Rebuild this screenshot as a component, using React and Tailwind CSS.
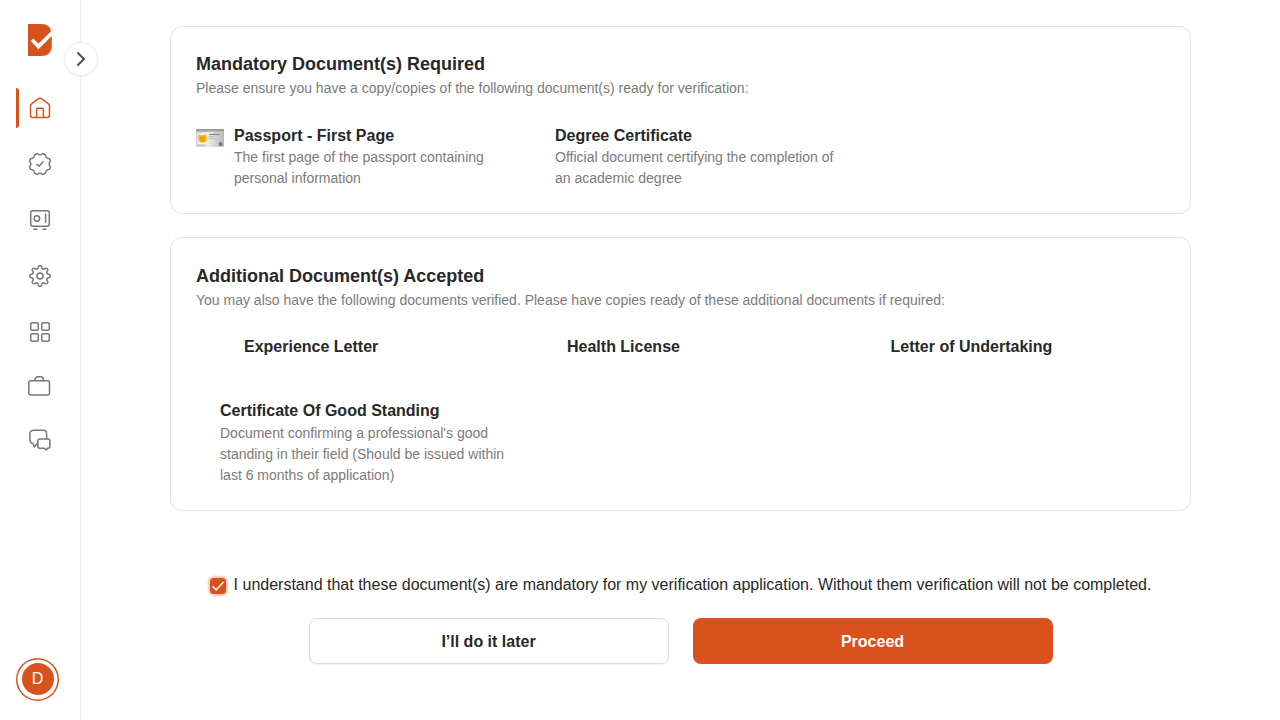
const line = {
  fill: 'none',
  stroke: 'currentColor',
  strokeWidth: 1.5,
  strokeLinecap: 'round',
  strokeLinejoin: 'round',
};

function Icon({ children }) {
  return (
    <svg width="24" height="24" viewBox="0 0 24 24" {...line}>
      {children}
    </svg>
  );
}

function wavePath(points, outer, inner, offset) {
  const n = points * 12;
  const mid = (outer + inner) / 2;
  const amp = (outer - inner) / 2;
  let d = '';
  for (let i = 0; i < n; i++) {
    const a = (i / n) * Math.PI * 2;
    const wave = Math.tanh(2 * Math.cos(points * (a - offset))) / Math.tanh(2);
    const r = mid + amp * wave;
    d += `${i ? 'L' : 'M'}${(12 + r * Math.cos(a)).toFixed(2)} ${(12 + r * Math.sin(a)).toFixed(2)}`;
  }
  return d + 'Z';
}

const gear = wavePath(8, 10.2, 7.5, 0);
const badge = wavePath(8, 10.8, 9.3, Math.PI / 8);

function Sidebar() {
  return (
    <aside className="relative flex h-full w-[81px] shrink-0 flex-col border-r border-[#ececec] pt-6 pb-[19.5px]">
      <svg className="ml-7" width="24" height="32" viewBox="0 0 24 32">
        <path d="M0 0h13.500C19 0 22.500 3 23 7.300L10.400 19.800 5.400 14.500 2.700 17.100l7.700 8.100L23.800 12V22c0 6-4 10-10 10H0Z" fill="#d9521e" />
      </svg>
      <button className="absolute top-[42px] left-16 flex size-[34px] items-center justify-center rounded-full border border-[#eeeeee] bg-white text-[#475066] shadow-[0_1px_3px_rgba(0,0,0,0.06)]">
        <svg width="16" height="16" viewBox="0 0 16 16" fill="none" stroke="currentColor" strokeWidth="2.100">
          <path d="M4.400 1.600 11 8l-6.600 6.400" />
        </svg>
      </button>
      <nav className="mt-8 flex flex-col text-[#777777]">
        <a className="flex h-10 items-center text-[#d9521e]">
          <span className="ml-4 h-10 w-[3px] rounded-r-[3px] bg-[#d9521e]" />
          <span className="ml-[9px]">
            <Icon>
              <path d="M2.500 9.800c0-.8.400-1.500 1-2l7-5.200c.9-.7 2.100-.7 3 0l7 5.200c.6.500 1 1.200 1 2v9.400c0 1.300-.9 2.200-2.200 2.200H4.700c-1.300 0-2.200-.9-2.200-2.200Z" />
              <path d="M8.600 21.300v-8.100c0-.5.400-.9.900-.9h5c.5 0 .9.400.9.900v8.100" />
            </Icon>
          </span>
        </a>
        <a className="mt-4 flex h-10 items-center pl-7">
          <Icon>
            <path d={badge} />
            <path d="m8.900 12.200 2.200 2 4-4.500" />
          </Icon>
        </a>
        <a className="mt-4 flex h-10 items-center pl-7">
          <Icon>
            <rect x="2.700" y="2.700" width="18.600" height="15.600" rx="2.200" />
            <circle cx="8.900" cy="10.500" r="2.700" />
            <path d="M17.600 6.300v8M5.900 21.200h2.900M15 21.200h2.900" />
          </Icon>
        </a>
        <a className="mt-4 flex h-10 items-center pl-7">
          <Icon>
            <path d={gear} />
            <circle cx="12" cy="12" r="3" />
          </Icon>
        </a>
        <a className="mt-4 flex h-10 items-center pl-7">
          <Icon>
            <rect x="2.700" y="2.700" width="7.600" height="7.600" rx="1.500" />
            <rect x="13.700" y="2.700" width="7.600" height="7.600" rx="1.500" />
            <rect x="2.700" y="13.700" width="7.600" height="7.600" rx="1.500" />
            <rect x="13.700" y="13.700" width="7.600" height="7.600" rx="1.500" />
          </Icon>
        </a>
        <a className="mt-3.5 flex h-10 items-center pl-7">
          <Icon>
            <rect x="0.800" y="6.700" width="20.700" height="14.400" rx="2" />
            <path d="M7 6.500V5.600c0-1.700 1.200-2.900 2.900-2.900h2.500c1.700 0 2.900 1.200 2.900 2.900v.9" />
          </Icon>
        </a>
        <a className="mt-3.5 flex h-10 items-center pl-7">
          <Icon>
            <path d="M9.200 15.400 6.300 18.900 5 15.600C3 15.200 1.900 13.700 1.900 11.600V5.800C1.900 3.600 3.300 2.300 5.500 2.300h9.600c2.200 0 3.500 1.300 3.500 3.500v5" />
            <path d="M11.900 11h8c1.200 0 2 .8 2 2v5.300c0 1.200-.8 2-2 2h-.6l-.6 1.700-2.500-1.700h-4.300c-1.200 0-2-.8-2-2V13c0-1.200.8-2 2-2Z" />
          </Icon>
        </a>
      </nav>
      <div className="mt-auto ml-4 flex size-[43px] items-center justify-center rounded-full shadow-[inset_0_0_0_1.5px_#d9521e]">
        <span className="flex size-8 items-center justify-center rounded-full bg-[#d9521e] pb-px text-base text-white">D</span>
      </div>
    </aside>
  );
}

function IdCard() {
  return (
    <svg className="mt-1 mr-2.5 shrink-0" width="28" height="18" viewBox="0 0 28 18">
      <defs>
        <linearGradient id="card" x1="0" y1="0" x2="1" y2="0">
          <stop offset="0" stopColor="#cfcfcf" />
          <stop offset=".45" stopColor="#eaeaea" />
          <stop offset="1" stopColor="#b8b8b8" />
        </linearGradient>
        <linearGradient id="edge" x1="0" y1="0" x2="0" y2="1">
          <stop offset="0" stopColor="#8f8f8f" />
          <stop offset="1" stopColor="#b5b5b5" />
        </linearGradient>
      </defs>
      <rect width="28" height="18" rx="1" fill="url(#card)" />
      <path d="M0 1c0-.6.400-1 1-1h26c.6 0 1 .4 1 1v1.800H0Z" fill="url(#edge)" />
      <rect x="1.500" y="4.500" width="10" height="10.500" fill="#f7f3e4" />
      <path d="M2.500 5.600 4 6.300h5l1.500-.7v6L8.800 13.500H4.200L2.500 11.600Z" fill="#f5ae14" />
      <path d="M4.200 8.600h1.400M7.400 8.600h1.400M4.800 11h3.400" stroke="#c98209" strokeWidth=".8" />
      <path d="M13 5.500h10.500" stroke="#777" strokeWidth=".9" />
      <path d="M12.500 7.700h6M12.500 9.700h9M3 16.300h7" stroke="#b0b0b0" strokeWidth=".7" />
      <circle cx="24.500" cy="15" r="2" fill="#7d7d7d" />
    </svg>
  );
}

function CardHeading({ title, text }) {
  return (
    <>
      <h2 className="text-lg leading-6 font-bold">{title}</h2>
      <p className="text-sm leading-[25px] text-[#7b7b7b]">{text}</p>
    </>
  );
}

export default function App() {
  return (
    <div className="flex h-screen overflow-hidden bg-white font-['Liberation_Sans',Arial,sans-serif] text-[#282828]">
      <Sidebar />
      <main className="flex flex-1 flex-col items-center pt-[26px]">
        <section className="h-[188px] w-[1021px] rounded-xl border border-[#e2e2e2] pt-[25px] pl-[25px]">
          <CardHeading title="Mandatory Document(s) Required" text="Please ensure you have a copy/copies of the following document(s) ready for verification:" />
          <div className="mt-6 flex">
            <div className="flex w-[359px]">
              <IdCard />
              <div>
                <h3 className="text-base leading-[22px] font-bold">Passport - First Page</h3>
                <p className="text-sm leading-[21px] text-[#7b7b7b]">The first page of the passport containing<br />personal information</p>
              </div>
            </div>
            <div>
              <h3 className="text-base leading-[22px] font-bold">Degree Certificate</h3>
              <p className="text-sm leading-[21px] text-[#7b7b7b]">Official document certifying the completion of<br />an academic degree</p>
            </div>
          </div>
        </section>
        <section className="mt-[23px] h-[274px] w-[1021px] rounded-xl border border-[#e2e2e2] pt-[26px] pl-[25px]">
          <CardHeading title="Additional Document(s) Accepted" text="You may also have the following documents verified. Please have copies ready of these additional documents if required:" />
          <div className="mt-[23px] flex pl-12 text-base leading-[22px] font-bold">
            <h3 className="w-[323px]">Experience Letter</h3>
            <h3 className="w-[323.5px]">Health License</h3>
            <h3>Letter of Undertaking</h3>
          </div>
          <div className="mt-[42px] pl-6">
            <h3 className="text-base leading-[22px] font-bold">Certificate Of Good Standing</h3>
            <p className="mt-px text-sm leading-[21px] text-[#7b7b7b]">Document confirming a professional's good<br />standing in their field (Should be issued within<br />last 6 months of application)</p>
          </div>
        </section>
        <label className="mt-[62px] flex h-6 items-center text-base">
          <span className="mt-px mr-2 flex size-4 items-center justify-center rounded-[4px] bg-[#d9521e] shadow-[0_0_2px_2px_#f5c6b3]">
            <svg width="16" height="16" viewBox="0 0 16 16" fill="none" stroke="white" strokeWidth="1.500">
              <path d="m2.500 8.300 3.600 3.600 7.500-8" />
            </svg>
          </span>
          I understand that these document(s) are mandatory for my verification application. Without them verification will not be completed.
        </label>
        <div className="mt-[21px] flex gap-6 text-base font-bold">
          <button className="h-[46px] w-[360px] rounded-lg border border-[#dedede] bg-white pt-0.5 shadow-[0_1px_2px_rgba(0,0,0,0.06)]">I’ll do it later</button>
          <button className="h-[46px] w-[360px] rounded-lg bg-[#d9521e] pt-0.5 text-white">Proceed</button>
        </div>
      </main>
    </div>
  );
}
